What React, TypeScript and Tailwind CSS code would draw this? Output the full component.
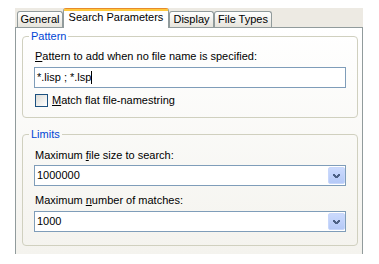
import React from "react";

const TABS = [
  { label: "General", w: "w-[46px]" },
  { label: "Search Parameters", w: "w-[106px]", active: true },
  { label: "Display", w: "w-[45px]" },
  { label: "File Types", w: "w-[58px]" },
];

function Chevron() {
  // pixel chevron, 7x4
  const px = [
    [0, 0], [1, 0], [5, 0], [6, 0],
    [0, 1], [1, 1], [2, 1], [4, 1], [5, 1], [6, 1],
    [1, 2], [2, 2], [3, 2], [4, 2], [5, 2],
    [2, 3], [3, 3], [4, 3],
  ];
  return (
    <svg width="7" height="4" viewBox="0 0 7 4" shapeRendering="crispEdges">
      {px.map(([x, y]) => (
        <rect key={`${x}-${y}`} x={x} y={y} width="1" height="1" fill="#4D6185" />
      ))}
    </svg>
  );
}

function Combo({ value }: { value: string }) {
  return (
    <div className="flex h-[21px] items-start border border-[#7F9DB9] bg-white">
      <span className="flex-1 pl-[2px] pt-[3px] leading-[13px]">{value}</span>
      <div className="mt-[1px] flex h-[17px] w-[17px] items-center justify-center rounded-[2px] border border-[#C8D7FB] bg-linear-to-b from-[#CBDAFD] to-[#B5C9F7] pt-px">
        <Chevron />
      </div>
    </div>
  );
}

function Group({ title, className = "", children }: { title: string; className?: string; children: React.ReactNode }) {
  return (
    <fieldset className={`rounded-[4px] border border-[#D0D0BF] px-[11px] ${className}`}>
      <legend className="ml-[-5px] px-[2px] leading-[13px] text-[#0046D5]">{title}</legend>
      {children}
    </fieldset>
  );
}

export default function App() {
  return (
    <div
      className="h-[264px] w-[379px] bg-white pl-[15px] pt-[8px] text-[11px] text-black"
      style={{ fontFamily: '"Liberation Sans", Arial, sans-serif' }}
    >
      <div className="w-[348px]">
        {/* tab strip */}
        <div className="flex h-[19px] items-end bg-[#EDEAE3] pl-[2px]">
          {TABS.map((t) =>
            t.active ? (
              <div
                key={t.label}
                className={`relative z-10 -mb-px flex h-[20px] ${t.w} flex-col rounded-t-[3px] border-x border-t border-x-[#919B9C] border-t-[#E68B2C] bg-white`}
              >
                <div className="h-[2px] bg-[#FFC83C]" />
                <span className="text-center leading-[13px]">{t.label}</span>
              </div>
            ) : (
              <div
                key={t.label}
                className={`flex h-[16px] ${t.w} items-center justify-center rounded-t-[3px] border-x border-t border-[#919B9C] bg-linear-to-b from-white to-[#E6E4DC] leading-[13px]`}
              >
                {t.label}
              </div>
            )
          )}
        </div>

        {/* page */}
        <div className="h-[227px] border-x border-t border-[#919B9C] bg-linear-to-b from-white to-[#F4F3EE] pl-[6px] pr-[4px] pt-[2px]">
          <Group title="Pattern" className="pb-[10px]">
            <div className="pl-[1px] pt-[7px] leading-[13px]">
              <u>P</u>attern to add when no file name is specified:
            </div>
            <div className="mt-[4px] flex h-[21px] items-center border border-[#7F9DB9] bg-white pl-[2px] leading-[13px]">
              <span>*.lisp ; *.lsp</span>
              <span className="h-[13px] w-px bg-black" />
            </div>
            <div className="mt-[6px] flex h-[13px] items-center pl-[1px]">
              <span className="h-[13px] w-[13px] border border-[#1C5180] bg-linear-to-br from-[#DCDCD7] to-white" />
              <span className="ml-[4px] leading-[13px]">
                <u>M</u>atch flat file-namestring
              </span>
            </div>
          </Group>

          <Group title="Limits" className="mt-[10px] pb-[13px]">
            <div className="pl-[1px] pt-[8px] leading-[13px]">
              Maximum <u>f</u>ile size to search:
            </div>
            <div className="mt-[3px]">
              <Combo value="1000000" />
            </div>
            <div className="mt-[8px] pl-[1px] leading-[13px]">
              Maximum <u>n</u>umber of matches:
            </div>
            <div className="mt-[4px]">
              <Combo value="1000" />
            </div>
          </Group>
        </div>
      </div>
    </div>
  );
}
